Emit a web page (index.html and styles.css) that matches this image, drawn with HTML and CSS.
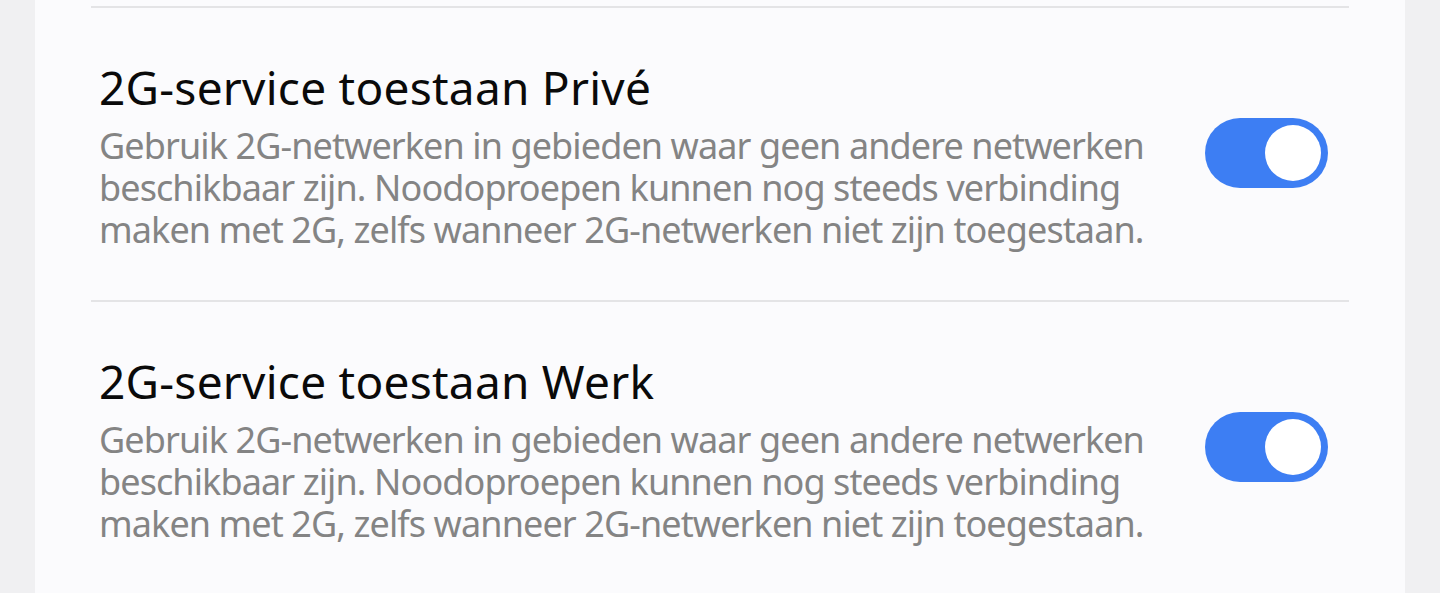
FILE: index.html
```html
<!DOCTYPE html>
<html lang="nl">
<head>
<meta charset="utf-8">
<title>2G-service</title>
<link rel="stylesheet" href="styles.css">
</head>
<body>
<div class="page">
  <div class="card">
    <div class="row">
      <div class="text">
        <div class="title">2G-service toestaan Privé</div>
        <div class="desc">Gebruik 2G-netwerken in gebieden waar geen andere netwerken beschikbaar zijn. Noodoproepen kunnen nog steeds verbinding maken met 2G, zelfs wanneer 2G-netwerken niet zijn toegestaan.</div>
      </div>
      <div class="switch on"><span class="thumb"></span></div>
    </div>
    <div class="row">
      <div class="text">
        <div class="title">2G-service toestaan Werk</div>
        <div class="desc">Gebruik 2G-netwerken in gebieden waar geen andere netwerken beschikbaar zijn. Noodoproepen kunnen nog steeds verbinding maken met 2G, zelfs wanneer 2G-netwerken niet zijn toegestaan.</div>
      </div>
      <div class="switch on"><span class="thumb"></span></div>
    </div>
  </div>
</div>
</body>
</html>
```
FILE: styles.css
```css
html, body {
  margin: 0;
  padding: 0;
  background: #f0f0f2;
  height: 100%;
  overflow: hidden;
}
.page {
  padding: 0 35px;
  font-family: "Noto Sans", "Open Sans", sans-serif;
}
.card {
  background: #fbfbfd;
  padding: 6px 56px 0;
  min-height: 600px;
}
.row {
  border-top: 2px solid #e4e4e6;
  display: flex;
  align-items: center;
  padding: 51px 21px 49px 8px;
}
.text {
  flex: 1;
}
.title {
  font-size: 46px;
  line-height: 57px;
  letter-spacing: 0.25px;
  color: #0a0a0a;
  margin-bottom: 9px;
}
.desc {
  font-size: 36px;
  line-height: 42px;
  letter-spacing: -0.9px;
  color: #848484;
  max-width: 1060px;
}
.switch {
  width: 123px;
  height: 70px;
  border-radius: 35px;
  background: #3d7ef3;
  display: flex;
  align-items: center;
  justify-content: flex-end;
  padding: 0 7px;
  box-sizing: border-box;
  flex-shrink: 0;
  margin-bottom: 4px;
}
.thumb {
  width: 56px;
  height: 56px;
  border-radius: 50%;
  background: #ffffff;
}
```
